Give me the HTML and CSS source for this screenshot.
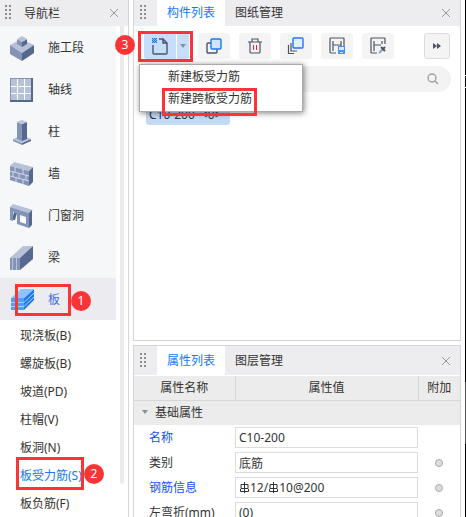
FILE: index.html
```html
<!DOCTYPE html>
<html lang="zh-CN">
<head>
<meta charset="utf-8">
<title>构件列表</title>
<link rel="stylesheet" href="styles.css">
</head>
<body>
<div class="app">
  <aside class="nav">
    <header class="bar">
      <span class="grip"></span>
      <h2 class="bar-title">导航栏</h2>
      <button class="close" aria-label="关闭导航栏"><svg width="10" height="10" viewBox="0 0 10 10"><path d="M1 1l8 8M9 1l-8 8"/></svg></button>
    </header>
    <div class="nav-body">
      <div class="nav-scroll">
        <ul class="groups">
          <li><button class="group"><svg width="26" height="26" viewBox="0 0 26 26"><path fill="#b7c1d8" d="M1 10l11-6 13 6-12 8z"/><path fill="#8494b9" d="M1 10l12 8v8L1 19z"/><path fill="#566890" d="M25 10l-12 8v8l12-8z"/><path fill="#8494b9" d="M8 4l5 3v5l-5-3z"/><path fill="#566890" d="M18 4l-5 3v5l5-3z"/><path fill="#b7c1d8" d="M8 4l5-3 5 3-5 3z"/></svg>施工段</button></li>
          <li><button class="group"><svg width="26" height="26" viewBox="0 0 26 26"><path fill="#566890" d="M1 1h23v24H1z"/><path fill="#8494b9" d="M1 1h21v22H1z"/><path fill="#b7c1d8" d="M2 2h20v21H2z"/><path stroke="#fff" fill="none" d="M8.500 2v21M15.500 2v21M2 9.500h20M2 16.500h20"/></svg>轴线</button></li>
          <li><button class="group"><svg width="26" height="26" viewBox="0 0 26 26"><path fill="#8494b9" d="M4 20l9 4v2l-9-4z"/><path fill="#566890" d="M22 20l-9 4v2l9-4z"/><path fill="#b7c1d8" d="M4 20l9-4 9 4-9 4z"/><path fill="#8494b9" d="M8 3l5 2v17l-5-2z"/><path fill="#566890" d="M18 3l-5 2v17l5-2z"/><path fill="#b7c1d8" d="M8 3l5-2 5 2-5 2z"/></svg>柱</button></li>
          <li><button class="group"><svg width="26" height="26" viewBox="0 0 26 26"><path fill="#b7c1d8" d="M1 5l4-4 19 5-4 4z"/><path fill="#8494b9" d="M1 5l19 5v15L1 19z"/><path fill="#566890" d="M24 6l-4 4v15l4-4z"/><path fill="none" stroke="#d0d8e8" d="M1 10l19 5M1 15l19 5M6 6v5M14 8v5M4 11v5M10 12v5M17 14v5M7 16v5M14 18v5"/></svg>墙</button></li>
          <li><button class="group"><svg width="26" height="26" viewBox="0 0 26 26"><path fill="#b7c1d8" d="M1 4l3-3 20 6-4 3z"/><path fill="#566890" d="M23 7l-3 3v15l3-3zM5 9l3 1-2 7H3z"/><path fill="#8494b9" fill-rule="evenodd" d="M1 4l19 6v15l-12-4V10L4 9v9l-3-1zM11 12v7l6 2v-7z"/><path fill="#fff" d="M13 15l4 2v3l-5-2z"/></svg>门窗洞</button></li>
          <li><button class="group"><svg width="26" height="26" viewBox="0 0 26 26"><path fill="#b7c1d8" d="M1 13L14 1h10L11 13z"/><path fill="#566890" d="M11 13L24 1v13L11 25z"/><path fill="#8494b9" d="M1 13h10v12H1z"/><path stroke="#b7c1d8" fill="none" d="M3.500 13v12M7.500 13v12"/></svg>梁</button></li>
          <li class="marked"><button class="group active"><svg width="26" height="26" viewBox="0 0 26 26"><path fill="#4aa0fb" d="M2 11h13v12H2z"/><path fill="#1f78f0" d="M15 11L25 2v11L15 23z"/><path fill="#8cc4ff" d="M2 11L12 2h13L15 11z"/><path fill="none" stroke="#a9d3ff" d="M2 15.500h13l10-9.500M2 19.500h13l10-9.500"/></svg>板</button><span class="mark mark-slab"></span><span class="badge badge-slab">1</span></li>
        </ul>
        <ul class="subs">
          <li><a class="sub" href="#">现浇板(B)</a></li>
          <li><a class="sub" href="#">螺旋板(B)</a></li>
          <li><a class="sub" href="#">坡道(PD)</a></li>
          <li><a class="sub" href="#">柱帽(V)</a></li>
          <li><a class="sub" href="#">板洞(N)</a></li>
          <li class="marked"><a class="sub current" href="#">板受力筋(S)</a><span class="mark mark-rebar"></span><span class="badge badge-rebar">2</span></li>
          <li><a class="sub" href="#">板负筋(F)</a></li>
        </ul>
      </div>
      <div class="track"><span class="thumb"></span></div>
    </div>
  </aside>

  <main class="side">
    <section class="panel members">
      <header class="bar">
        <span class="grip"></span>
        <button class="tab on">构件列表</button>
        <button class="tab">图纸管理</button>
        <button class="close" aria-label="关闭构件列表"><svg width="10" height="10" viewBox="0 0 10 10"><path d="M1 1l8 8M9 1l-8 8"/></svg></button>
      </header>
      <div class="tools">
        <div class="split">
          <button class="tool new" aria-label="新建"><svg width="18" height="18" viewBox="0 0 18 18"><path fill="none" stroke="#4b5468" stroke-width="1.400" d="M2 8v8q0 1 1 1h12q1 0 1-1V6l-4-4H8M12 2v4h4"/><path fill="#1f78f0" d="M1 1h1v1H1zM3 1h1v1H3zM5 1h1v1H5zM2 2h1v1H2zM4 2h1v1H4zM1 3h1v1H1zM3 3h1v1H3zM5 3h1v1H5zM2 4h1v1H2zM4 4h1v1H4zM1 5h1v1H1zM3 5h1v1H3zM5 5h1v1H5z"/><path fill="#1f78f0" fill-opacity=".4" d="M1 1h5v5H1z"/></svg></button>
          <button class="tool drop" aria-label="新建选项"><svg width="6" height="4" viewBox="0 0 6 4"><path fill="#8a8f98" d="M0 0h6L3 4z"/></svg></button>
          <span class="mark mark-new"></span><span class="badge badge-new">3</span>
          <div class="menu">
            <button class="menu-item">新建板受力筋</button>
            <button class="menu-item">新建跨板受力筋</button>
            <span class="mark mark-menu"></span>
          </div>
        </div>
        <button class="tool" aria-label="复制"><svg width="18" height="18" viewBox="0 0 18 18"><rect x="2" y="6" width="10" height="10" rx="1" fill="none" stroke="#4b5468" stroke-width="1.400"/><rect x="6" y="2" width="10" height="10" rx="1" fill="#cfe3fb" stroke="#1f78f0" stroke-width="1.400"/></svg></button>
        <button class="tool" aria-label="删除"><svg width="18" height="18" viewBox="0 0 18 18"><path fill="none" stroke="#4b5468" stroke-width="1.200" d="M2 5h14M6 5V2h6v3M4 5v10q0 1 1 1h8q1 0 1-1V5"/><path stroke="#e8232b" d="M7.500 8v5M10.500 8v5"/></svg></button>
        <button class="tool" aria-label="层间复制"><svg width="18" height="18" viewBox="0 0 18 18"><path fill="none" stroke="#4b5468" stroke-width="1.200" d="M4 6v8h6M1.500 8v8.500H7"/><rect x="6" y="1" width="10" height="10" rx="1" fill="#e2effe" stroke="#1f78f0" stroke-width="1.400"/></svg></button>
        <button class="tool" aria-label="存档"><svg width="18" height="18" viewBox="0 0 18 18"><path fill="none" stroke="#4b5468" stroke-width="1.200" d="M16 9V2q0-1-1-1H3Q2 1 2 2v13q0 1 1 1h5M5 14V4M5 8h8M13 4v5"/><path fill="#4a90e8" d="M10 9h7v8h-7z"/><path fill="#dcebfc" d="M11 10h5v3h-5zM12 15h3v1h-3z"/></svg></button>
        <button class="tool" aria-label="提取"><svg width="18" height="18" viewBox="0 0 18 18"><path fill="none" stroke="#4b5468" stroke-width="1.200" d="M16 7V2q0-1-1-1H3Q2 1 2 2v13q0 1 1 1h5M5 14V4M5 8h7M13 4v3"/><path stroke="#8ba2c4" stroke-width="2" d="M10 16l4-4"/><path stroke="#4b5468" stroke-width="2" d="M12 10l4 4M14 12l2-2"/></svg></button>
        <button class="tool more" aria-label="更多"><svg width="8" height="6" viewBox="0 0 8 6"><path fill="#4b5468" d="M0 0l4 3-4 3zM4 0l4 3-4 3z"/></svg></button>
      </div>
      <div class="search">
        <input class="search-input" type="search" aria-label="搜索构件">
        <svg width="12" height="12" viewBox="0 0 12 12"><circle cx="5" cy="5" r="4" fill="none" stroke="#a0a0a0" stroke-width="1.400"/><path stroke="#a0a0a0" stroke-width="1.400" d="M8 8l3 3"/></svg>
      </div>
      <ul class="list"><li class="entry">C10-200  &lt;0&gt;</li></ul>
    </section>

    <section class="panel props">
      <header class="bar tall">
        <span class="grip"></span>
        <button class="tab on">属性列表</button>
        <button class="tab">图层管理</button>
        <button class="close" aria-label="关闭属性列表"><svg width="10" height="10" viewBox="0 0 10 10"><path d="M1 1l8 8M9 1l-8 8"/></svg></button>
      </header>
      <table class="grid">
        <colgroup><col class="c-name"><col><col class="c-extra"></colgroup>
        <thead><tr><th>属性名称</th><th>属性值</th><th>附加</th></tr></thead>
        <tbody>
          <tr class="section"><td colspan="3"><svg width="6" height="4" viewBox="0 0 6 4"><path fill="#8a8f98" d="M0 0h6L3 4z"/></svg>基础属性</td></tr>
          <tr><td><label class="key" for="p1">名称</label></td><td><input class="field" id="p1" value="C10-200"></td><td></td></tr>
          <tr><td><label for="p2">类别</label></td><td><input class="field" id="p2" value="底筋"></td><td class="extra"><input class="dot" type="radio" aria-label="附加类别"></td></tr>
          <tr><td><span class="key" id="k3">钢筋信息</span></td><td><div class="field" role="textbox" contenteditable="true" aria-labelledby="k3"><svg class="bar-sign" width="11" height="12" viewBox="0 0 11 12"><path fill="none" stroke="#333" d="M2 2.500h7v4H2zM5.500 0v11M1.500 7v2.500h8V7"/></svg>12/<svg class="bar-sign" width="11" height="12" viewBox="0 0 11 12"><path fill="none" stroke="#333" d="M2 2.500h7v4H2zM5.500 0v11M1.500 7v2.500h8V7"/></svg>10@200</div></td><td class="extra"><input class="dot" type="radio" aria-label="附加钢筋信息"></td></tr>
          <tr><td><label for="p4">左弯折(mm)</label></td><td><input class="field" id="p4" value="(0)"></td><td class="extra"><input class="dot" type="radio" aria-label="附加左弯折"></td></tr>
        </tbody>
      </table>
    </section>
  </main>
  <div class="canvas-edge"></div>
</div>
</body>
</html>
```
FILE: styles.css
```css
* { box-sizing: border-box; }
body {
  margin: 0;
  background: #fff;
  color: #333;
  font: 12px/20px "Noto Sans", "Noto Sans CJK SC", sans-serif;
}
button, input { font: inherit; color: inherit; border: 0; padding: 0; margin: 0; background: none; }
ul { list-style: none; margin: 0; padding: 0; }
a { color: inherit; text-decoration: none; }
svg { display: block; flex: none; }

.app { display: flex; height: 100vh; overflow: hidden; }

.bar { display: flex; align-items: stretch; height: 26px; background: #ededf0; flex: none; }
.bar.tall { height: 30px; border-bottom: 1px solid #fff; }
.grip {
  width: 8px; height: 16px; margin: auto 16px auto 3px; flex: none;
  background: conic-gradient(#8c8c90 25%, transparent 0) 0 0 / 4px 4px;
}
.panel .grip { margin: auto 11px auto 4px; }
.bar-title { margin: 0 auto 0 -3px; font: inherit; line-height: 28px; }
.close { margin: auto 9px auto auto; }
.close svg { fill: none; stroke: #999; }
.tab { width: 68px; text-align: center; }
.tab.on { background: #fff; color: #1479f2; }

.nav { width: 129px; flex: none; display: flex; flex-direction: column; border-right: 1px solid #d6d6d6; }
.nav-body { flex: 1; min-height: 0; display: flex; }
.nav-scroll { width: 116px; flex: none; }
.groups { background: #f5f7f9; }
.group { display: flex; align-items: center; gap: 13px; width: 100%; height: 42px; padding: 2px 0 0 9px; text-align: left; }
.group.active { background: #ebebf0; color: #3d6fe0; }
.subs { padding-top: 1px; }
.sub { display: block; height: 28px; line-height: 30px; padding-left: 20px; white-space: nowrap; }
.sub.current { color: #1479f2; }
.track { margin-left: 4px; }
.thumb { display: block; width: 4px; height: 458px; border-radius: 0 0 2px 2px; background: #ebebeb; }

.marked { position: relative; }
.mark { position: absolute; border: 3px solid #fb3535; pointer-events: none; }
.badge {
  position: absolute; width: 20px; height: 20px; border-radius: 50%;
  background: #fb3535; color: #fff; text-align: center; z-index: 3;
}
.mark-slab { left: 15px; top: 6px; width: 56px; height: 32px; }
.badge-slab { left: 71px; top: 13px; }
.mark-rebar { left: 16px; top: -4px; width: 68px; height: 33px; }
.badge-rebar { left: 84px; top: 3px; }
.mark-new { left: -6px; top: -2px; width: 55px; height: 31px; z-index: 3; }
.badge-new { left: -29px; top: 2px; }
.mark-menu { left: 22px; top: 23px; width: 95px; height: 28px; }

.side { flex: 1; min-width: 0; display: flex; flex-direction: column; gap: 4px; padding: 0 4px; }
.panel { border: 1px solid #d6d6d6; display: flex; flex-direction: column; }
.members { border-top: 0; flex: 0 0 66%; }
.props { flex: 1 0 auto; }

.tools { display: flex; gap: 9px; padding: 7px 10px 0; }
.tool { width: 32px; height: 26px; border-radius: 3px; background: #f4f4f5; display: flex; align-items: center; justify-content: center; }
.split { position: relative; display: flex; gap: 1px; }
.tool.new, .tool.drop { background: #c5defa; }
.tool.new { border-radius: 3px 0 0 3px; }
.tool.drop { width: 12px; border-radius: 0 3px 3px 0; }
.tool.more { width: 26px; margin-left: auto; border: 1px solid #dcdcdf; }

.menu {
  position: absolute; left: -5px; top: 31px; z-index: 2;
  width: 164px; padding: 1px 0; background: #fff; border: 1px solid #aaa;
  box-shadow: 1px 1px 6px rgba(0, 0, 0, .5);
}
.menu-item { display: block; width: 100%; height: 22px; padding-left: 28px; text-align: left; }

.search { display: flex; align-items: center; height: 26px; margin: 7px 9px 0; padding: 0 12px; border-radius: 13px; background: #f3f3f3; }
.search-input { flex: 1; min-width: 0; outline: 0; }
.list { padding: 12px 12px 0; }
.entry { width: 84px; padding-left: 3px; border-radius: 3px; background: #c3dbf5; line-height: 21px; white-space: pre; }

.grid { width: 100%; table-layout: fixed; border-collapse: collapse; }
.c-name { width: 101px; }
.c-extra { width: 42px; }
.grid th { height: 24px; padding: 0; font-weight: normal; background: #ececec; border-right: 1px solid #d6d6d6; border-bottom: 1px solid #d6d6d6; }
.grid th:last-child { border-right: 0; }
.grid td { height: 25px; padding: 2px 0; line-height: 20px; vertical-align: middle; }
.grid td:first-child { padding-left: 15px; white-space: nowrap; }
.grid .section td { height: 25px; padding: 0 8px; background: #ececec; }
.section svg { display: inline-block; margin-right: 7px; vertical-align: 3px; }
.key { color: #1450f5; }
.grid .field { display: flex; align-items: center; width: 100%; height: 21px; padding: 0 3px; border: 1px solid #dcdcdc; background: #fff; }
.grid .extra { text-align: center; }
.dot { appearance: none; display: block; width: 8px; height: 8px; margin: auto; border: 1px solid #aaa; border-radius: 50%; background: #dcdde0; }

.canvas-edge { width: 1px; flex: none; background: linear-gradient(#000 75px, #fff 0 76px, #000 0 87px, #fff 0 88px, #000 0 382px, #555 0 444px, #000 0); }
```
